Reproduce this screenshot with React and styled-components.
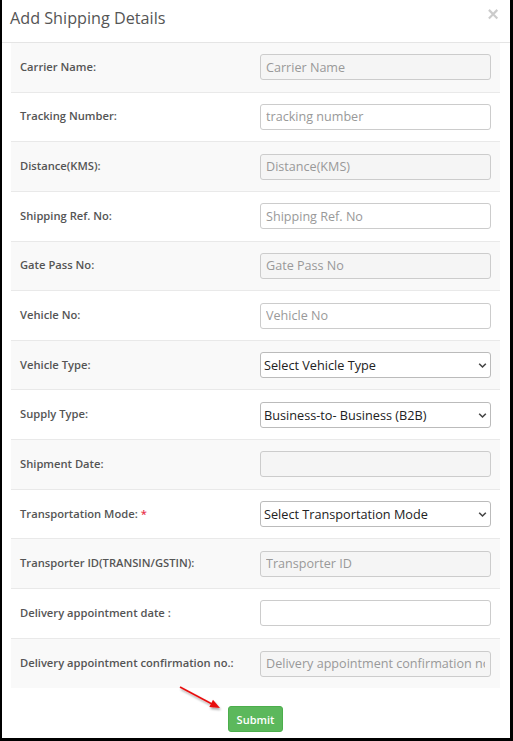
import React from "react";
import styled, { createGlobalStyle } from "styled-components";

const GlobalStyle = createGlobalStyle`
  html, body { margin: 0; padding: 0; background: #fff; }
  body { font-family: "Open Sans", "Liberation Sans", sans-serif; }
  * { box-sizing: border-box; }
`;

const Frame = styled.div`
  position: relative;
  width: 513px;
  height: 741px;
  background: #fff;
  border-left: 2px solid #000;
  border-right: 3px solid #000;
  border-bottom: 3px solid #000;
  display: flex;
  flex-direction: column;
`;

const Header = styled.div`
  position: relative;
  height: 43px;
  border-bottom: 1px solid #e5e5e5;
  padding: 6px 0 0 8px;
`;

const Title = styled.h4`
  margin: 0;
  font-size: 16.2px;
  font-weight: 400;
  color: #555;
  line-height: 24px;
`;

const Close = styled.span`
  position: absolute;
  right: 11px;
  top: 2px;
  font-size: 20px;
  font-weight: 700;
  color: #000;
  opacity: 0.2;
  line-height: 24px;
  font-family: "Liberation Sans", sans-serif;
`;

const Body = styled.div`
  padding: 0 10px 0 9px;
`;

const Table = styled.div`
  display: flex;
  flex-direction: column;
`;

const Row = styled.div`
  display: grid;
  grid-template-columns: 249px 1fr;
  align-items: center;
  height: 49.65px;
  border-bottom: 1px solid #e9e9e9;
  background: ${(p) => (p.$striped ? "#f9f9f9" : "#fff")};
  &:last-child { border-bottom: none; }
`;

const Label = styled.div`
  padding-left: 9px;
  font-size: 11.2px;
  font-weight: 600;
  color: #555;
  margin-top: -2px;
  white-space: nowrap;
`;

const Star = styled.span`
  color: #e8344e;
  margin-left: 3px;
`;

const Cell = styled.div`
  position: relative;
  padding-right: 9px;
`;

const Input = styled.input`
  display: block;
  width: 231px;
  height: 26px;
  border: 1px solid #ccc;
  border-radius: 3px;
  background: ${(p) => (p.$striped ? "#f5f5f5" : "#fff")};
  padding: 0 5px;
  font-family: "Open Sans", "Liberation Sans", sans-serif;
  font-size: 12.6px;
  color: #333;
  outline: none;
  &::placeholder { color: #999; }
`;

const Select = styled.select`
  display: block;
  width: 231px;
  height: 26px;
  border: 1px solid #bbb;
  border-radius: 3px;
  background: #fff;
  padding: 0 3px;
  font-family: "Open Sans", "Liberation Sans", sans-serif;
  font-size: 12.7px;
  color: #222;
  appearance: none;
  -webkit-appearance: none;
  outline: none;
`;

const Chevron = styled.svg`
  position: absolute;
  left: 218px;
  top: 10px;
  width: 9px;
  height: 7px;
  pointer-events: none;
`;

const Footer = styled.div`
  position: relative;
  display: flex;
  justify-content: center;
  padding-top: 18px;
`;

const Button = styled.button`
  width: 55px;
  height: 26px;
  background: #5cb85c;
  border: 1px solid #4cae4c;
  border-radius: 3px;
  color: #fff;
  font-family: "Open Sans", "Liberation Sans", sans-serif;
  font-size: 11px;
  font-weight: 600;
  padding: 0;
  margin-left: -1px;
`;

const Arrow = styled.svg`
  position: absolute;
  left: 170px;
  top: -1px;
  width: 60px;
  height: 30px;
  overflow: visible;
`;

const rows = [
  { label: "Carrier Name:", ph: "Carrier Name" },
  { label: "Tracking Number:", ph: "tracking number" },
  { label: "Distance(KMS):", ph: "Distance(KMS)" },
  { label: "Shipping Ref. No:", ph: "Shipping Ref. No" },
  { label: "Gate Pass No:", ph: "Gate Pass No" },
  { label: "Vehicle No:", ph: "Vehicle No" },
  { label: "Vehicle Type:", select: "Select Vehicle Type" },
  { label: "Supply Type:", select: "Business-to- Business (B2B)" },
  { label: "Shipment Date:", ph: "" },
  { label: "Transportation Mode:", select: "Select Transportation Mode", req: true },
  { label: "Transporter ID(TRANSIN/GSTIN):", ph: "Transporter ID" },
  { label: "Delivery appointment date :", ph: "" },
  { label: "Delivery appointment confirmation no.:", ph: "Delivery appointment confirmation no." },
];

export default function App() {
  return (
    <>
      <GlobalStyle />
      <Frame>
        <Header>
          <Title>Add Shipping Details</Title>
          <Close>×</Close>
        </Header>
        <Body>
          <Table>
            {rows.map((r, i) => {
              const striped = i % 2 === 0;
              return (
                <Row key={i} $striped={striped}>
                  <Label>
                    {r.label}
                    {r.req && <Star>*</Star>}
                  </Label>
                  <Cell>
                    {r.select ? (
                      <>
                        <Select defaultValue={r.select}>
                          <option>{r.select}</option>
                        </Select>
                        <Chevron viewBox="0 0 9 7">
                          <path d="M1.2 1.8 L4.5 5 L7.8 1.8" fill="none" stroke="#444" strokeWidth="1.6" />
                        </Chevron>
                      </>
                    ) : (
                      <Input $striped={striped} placeholder={r.ph} readOnly />
                    )}
                  </Cell>
                </Row>
              );
            })}
          </Table>
        </Body>
        <Footer>
          <Arrow viewBox="0 0 60 30">
            <defs>
              <filter id="sh" x="-20%" y="-20%" width="140%" height="160%">
                <feDropShadow dx="1" dy="2" stdDeviation="1.2" floodColor="#000" floodOpacity="0.35" />
              </filter>
            </defs>
            <g filter="url(#sh)">
              <line x1="8" y1="0" x2="40" y2="17" stroke="#e81010" strokeWidth="1.6" />
              <polygon points="48,21 37.3,19.9 41,12.8" fill="#e81010" />
            </g>
          </Arrow>
          <Button>Submit</Button>
        </Footer>
      </Frame>
    </>
  );
}
